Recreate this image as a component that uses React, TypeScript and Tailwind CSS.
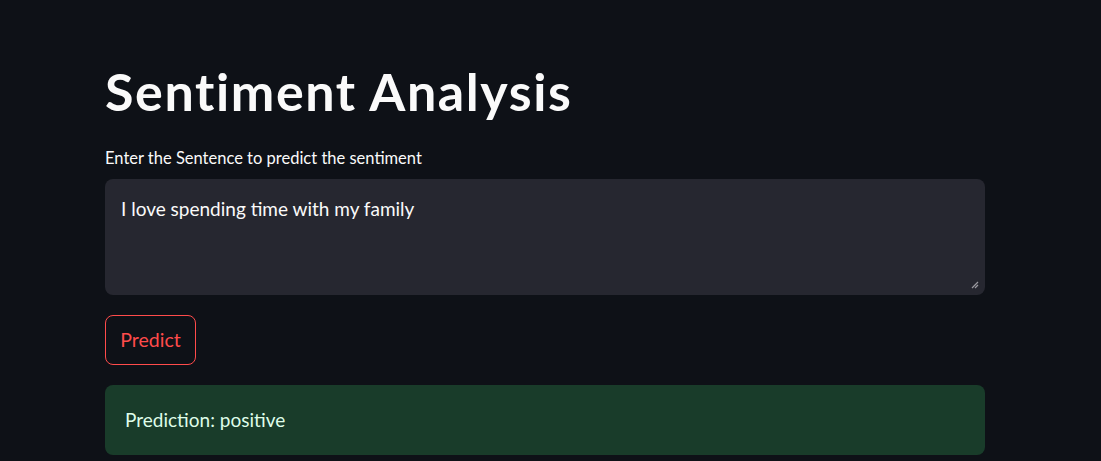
export default function App() {
  return (
    <div className="min-h-[461px] w-full bg-[#0e1117] font-['Lato','Noto_Sans',sans-serif] text-[#fafafa]">
      <div className="w-[880px] pt-[60px] ml-[105px]">
        <h1 className="text-[52px] font-bold leading-[62px] tracking-[1.6px]">Sentiment Analysis</h1>
        <div className="mt-[25px] text-[16.5px] leading-[22px]">Enter the Sentence to predict the sentiment</div>
        <div className="relative mt-[10px] h-[116px] rounded-[8px] bg-[#262730] px-[16px] pt-[18px] text-[19px] leading-[24px]">
          I love spending time with my family
          <svg className="absolute right-[6px] bottom-[6px]" width="8" height="8" viewBox="0 0 8 8">
            <path d="M1 7 L7 1 M4 7 L7 4" stroke="#9a9aa0" strokeWidth="1.2" />
          </svg>
        </div>
        <button className="mt-[20px] flex h-[50px] w-[91px] items-center justify-center rounded-[8px] border border-[#ff4b4b] text-[19.5px] text-[#ff4b4b]">
          Predict
        </button>
        <div className="mt-[20px] flex h-[70px] items-center rounded-[8px] bg-[#193c2a] px-[20px] text-[19px] text-[#dffde9]">
          Prediction: positive
        </div>
      </div>
    </div>
  );
}
